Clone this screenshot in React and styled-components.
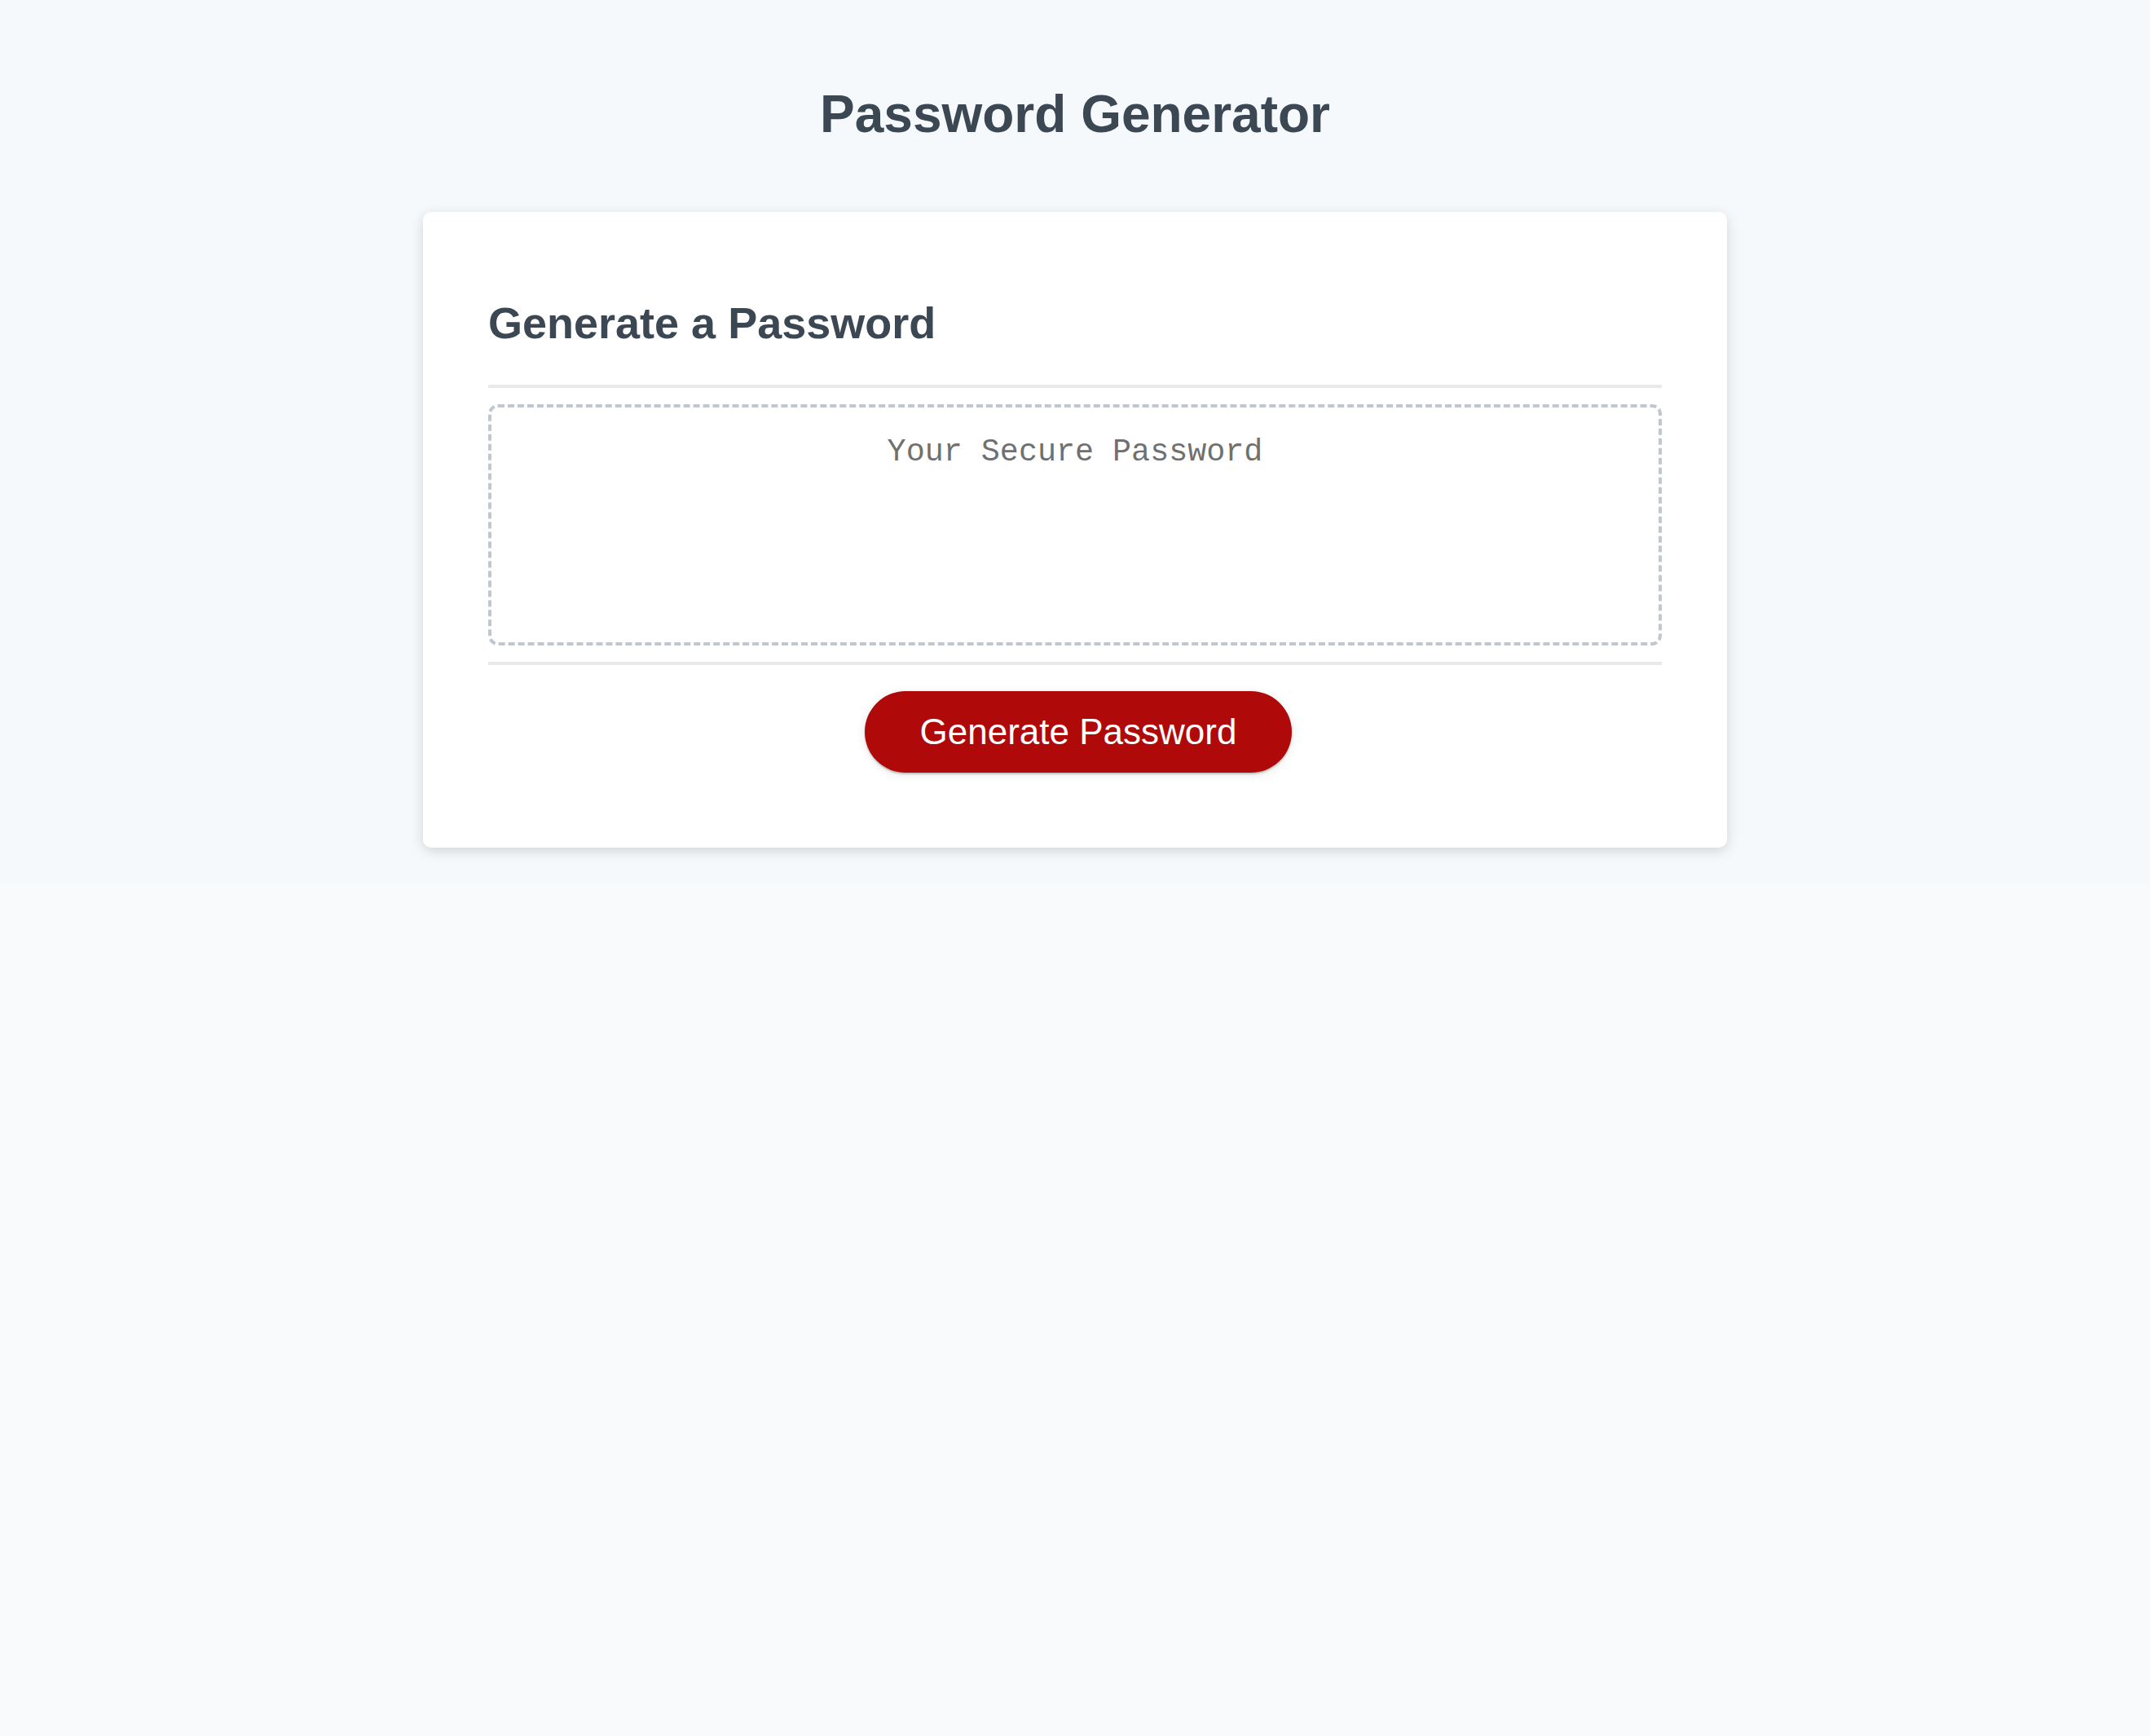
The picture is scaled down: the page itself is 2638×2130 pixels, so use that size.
import styled, { createGlobalStyle } from "styled-components";

// Estilos globais
const GlobalStyle = createGlobalStyle`
  *, *::before, *::after {
    box-sizing: border-box;
  }

  html, body {
    margin: 0;
    background-color: #f9fafb;
    font-family: "Liberation Sans", Arial, Helvetica, sans-serif;
  }
`;

// Faixa superior com fundo azulado
const Wrapper = styled.div`
  background-color: #f5f9fc;
  padding: 60px 40px 45px;
`;

const Header = styled.header`
  text-align: center;
  padding: 0 40px 40px;
  color: #3b4854;
`;

const Title = styled.h1`
  font-size: 64px;
  font-weight: bold;
  margin: 43px 0;
`;

// Card principal
const Card = styled.div`
  background-color: #fff;
  border-radius: 10px;
  box-shadow: 0 4px 16px rgba(0, 0, 0, 0.15);
  color: #3b4854;
  font-size: 36px;
  margin: 0 auto;
  max-width: 1600px;
  padding: 60px 80px;
`;

const CardHeader = styled.div`
  &::after {
    content: "";
    display: block;
    width: 100%;
    height: 4px;
    background: #e7e9eb;
  }
`;

const CardTitle = styled.h2`
  font-size: 54px;
  font-weight: bold;
  margin: 45px 0;
`;

const CardBody = styled.div`
  min-height: 200px;
`;

const PasswordBox = styled.textarea`
  appearance: none;
  display: block;
  width: 100%;
  padding: 33px 30px 167px;
  margin: 20px 0;
  font-family: "Liberation Mono", "Courier New", monospace;
  font-size: 38.4px;
  text-align: center;
  border: 4px dashed #c0c7cf;
  border-radius: 12px;
  resize: none;
  overflow: hidden;
  color: #333;
  background: #fff;

  &::placeholder {
    color: #707070;
  }

  &:focus {
    outline: none;
  }
`;

const CardFooter = styled.div`
  text-align: center;

  &::before {
    content: "";
    display: block;
    width: 100%;
    height: 4px;
    background: #e7e9eb;
  }
`;

// Botão vermelho arredondado
const GenerateBtn = styled.button`
  border: none;
  background-color: #af0909;
  border-radius: 50px;
  box-shadow: 0 2px 12px rgba(0, 0, 0, 0.1), 0 2px 2px rgba(0, 0, 0, 0.2);
  color: #fff;
  display: inline-block;
  font-family: "Liberation Sans", Arial, Helvetica, sans-serif;
  font-size: 44px;
  line-height: 44px;
  margin: 32px 32px 32px 40px;
  padding: 28px 68px;
  text-align: center;
  cursor: pointer;
`;

const App = () => {
  return (
    <>
      <GlobalStyle />
      <Wrapper>
        <Header>
          <Title>Password Generator</Title>
        </Header>

        <Card>
          <CardHeader>
            <CardTitle>Generate a Password</CardTitle>
          </CardHeader>

          <CardBody>
            <PasswordBox
              readOnly
              placeholder="Your Secure Password"
              aria-label="Generated Password"
            />
          </CardBody>

          <CardFooter>
            <GenerateBtn type="button">Generate Password</GenerateBtn>
          </CardFooter>
        </Card>
      </Wrapper>
    </>
  );
};

export default App;
